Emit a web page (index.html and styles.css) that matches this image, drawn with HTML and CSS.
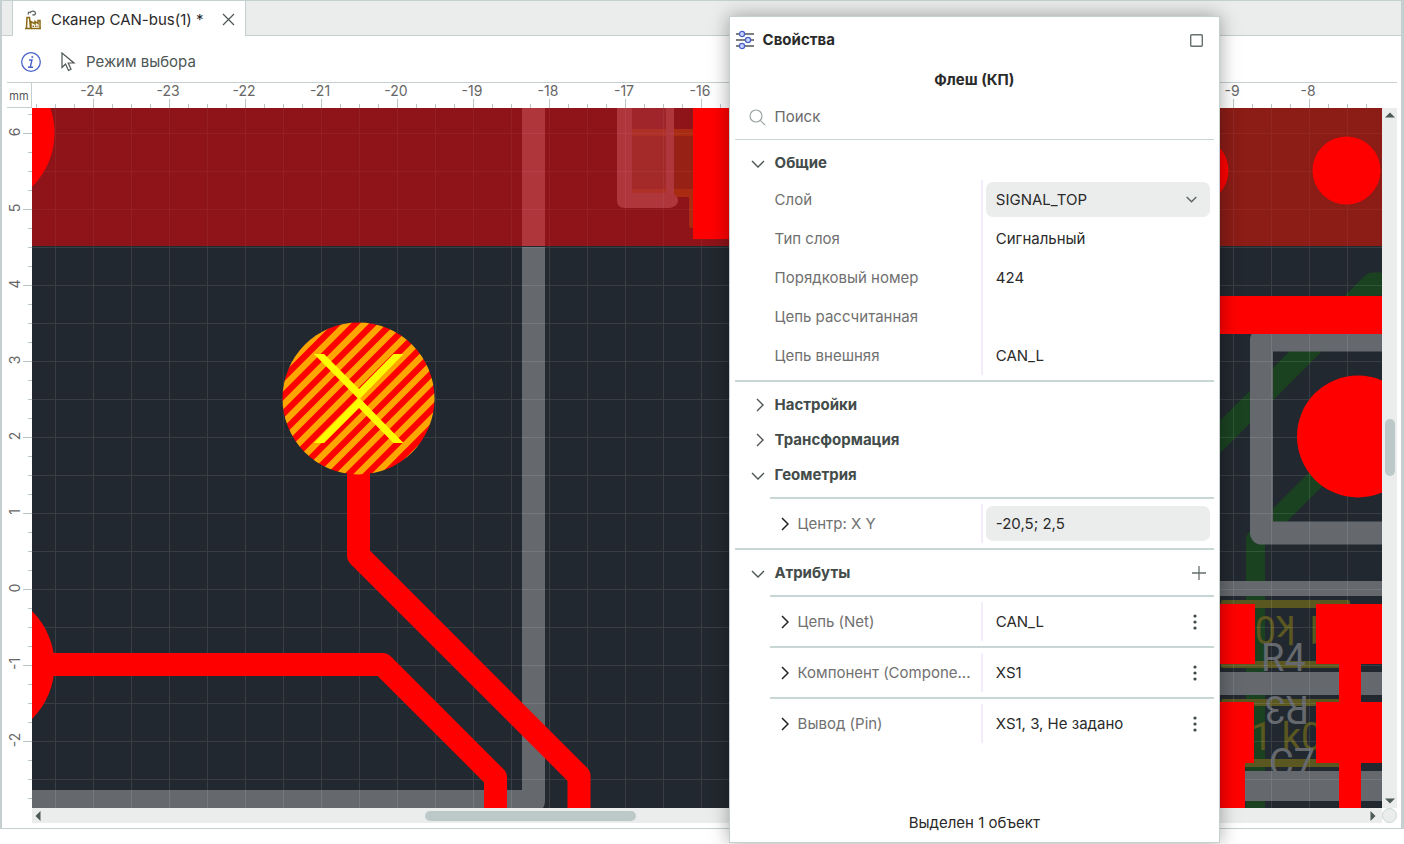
FILE: index.html
```html
<!DOCTYPE html>
<html lang="ru">
<head>
<meta charset="utf-8">
<title>Сканер CAN-bus(1)</title>
<link rel="stylesheet" href="styles.css">
</head>
<body>
<main class="window">
  <nav class="tabs">
    <div class="tab">
      <svg class="tab-icon" width="18" height="20" viewBox="0 0 18 20" fill="none">
        <path d="M4.500 4.500C3.500 2.500 5.500 1.500 6.500 2.500C7.500.3 11.500.8 11.500 3.500C11.500 5 9.500 5.500 8.500 4.500" stroke="#5a6462" stroke-width="1.300"/>
        <path d="M1 18.500H17M2.500 18L3 7.500H5.500L6.500 18M7 18V11.500L11 14V11.500L14 13.500V10.500H16V18" stroke="#8a6a14" stroke-width="1.500"/>
        <path d="M8.500 16.200H14.500" stroke="#8a6a14" stroke-width="1.500" stroke-dasharray="1.500 1"/>
      </svg>
      <span>Сканер CAN-bus(1) *</span>
      <button class="icon-button" aria-label="Закрыть">
        <svg width="13" height="13" viewBox="0 0 13 13" stroke="#4c5654" stroke-width="1.200"><path d="M1 1L12 12M12 1L1 12"/></svg>
      </button>
    </div>
  </nav>

  <header class="toolbar">
    <button class="icon-button" aria-label="Информация">
      <svg width="20" height="20" viewBox="0 0 20 20" fill="none" stroke="#4a62c8"><circle cx="10" cy="10" r="9.300" stroke-width="1.300"/><path d="M8 8H11L9.300 15M7 15.300H12" stroke-width="1.400"/><circle cx="11.300" cy="5" r=".6" fill="#4a62c8"/></svg>
    </button>
    <button class="mode">
      <svg width="15" height="20" viewBox="0 0 15 20" fill="none" stroke="#4c5654" stroke-width="1.200"><path d="M1 1V15.500L4.500 12L7.500 18.500L10 17.300L7.200 11L13 11Z"/></svg>
      <span>Режим выбора</span>
    </button>
  </header>

  <section class="workspace">
    <div class="corner">mm</div>
    <svg class="ruler-top" aria-label="Линейка X">
      <defs>
        <pattern id="tick-x" x="4" y="0" width="19" height="25" patternUnits="userSpaceOnUse"><rect y="21" width="1" height="4" fill="#b9c6c6"/></pattern>
        <pattern id="major-x" x="61" y="0" width="76" height="25" patternUnits="userSpaceOnUse"><rect y="16" width="1" height="9" fill="#b9c6c6"/></pattern>
      </defs>
      <rect width="100%" height="25" fill="url(#tick-x)"/>
      <rect width="100%" height="25" fill="url(#major-x)"/>
      <g class="marks">
        <text x="60" y="13">-24</text><text x="136" y="13">-23</text><text x="212" y="13">-22</text><text x="288" y="13">-21</text><text x="364" y="13">-20</text><text x="440" y="13">-19</text><text x="516" y="13">-18</text><text x="592" y="13">-17</text><text x="668" y="13">-16</text><text x="1200" y="13">-9</text><text x="1276" y="13">-8</text>
      </g>
    </svg>
    <div class="ruler-end"></div>

    <svg class="ruler-left" aria-label="Линейка Y">
      <defs>
        <pattern id="tick-y" x="0" y="6" width="25" height="19" patternUnits="userSpaceOnUse"><rect x="21" width="4" height="1" fill="#b9c6c6"/></pattern>
        <pattern id="major-y" x="0" y="25" width="25" height="76" patternUnits="userSpaceOnUse"><rect x="16" width="9" height="1" fill="#b9c6c6"/></pattern>
      </defs>
      <rect width="25" height="100%" fill="url(#tick-y)"/>
      <rect width="25" height="100%" fill="url(#major-y)"/>
      <g class="marks">
        <text transform="translate(13 24) rotate(-90)">6</text><text transform="translate(13 100) rotate(-90)">5</text><text transform="translate(13 176) rotate(-90)">4</text><text transform="translate(13 252) rotate(-90)">3</text><text transform="translate(13 328) rotate(-90)">2</text><text transform="translate(13 404) rotate(-90)">1</text><text transform="translate(13 480) rotate(-90)">0</text><text transform="translate(13 556) rotate(-90)">-1</text><text transform="translate(13 632) rotate(-90)">-2</text>
      </g>
    </svg>

    <svg class="board" role="img" aria-label="Плата">
      <defs>
        <pattern id="grid" x="55" y="133" width="38" height="38" patternUnits="userSpaceOnUse"><path d="M0 .5H38M.5 1V38" stroke="#fff"/></pattern>
        <pattern id="hatch" x="4" width="18" height="18" patternUnits="userSpaceOnUse"><rect width="18" height="18" fill="#f00"/><path d="M-6 6L6 -6M-6 24L24 -6M12 24L24 12" stroke="#ffa500" stroke-width="6.400"/></pattern>
      </defs>
      <g transform="translate(-32 -108)">
        <!-- lower layer -->
        <g fill="none" stroke="#1a4221">
          <path d="M1200 457L1373 284H1800" stroke-width="23" stroke-linejoin="round"/>
          <path d="M1400 395L1255.500 539.500V820" stroke-width="19" stroke-linejoin="round"/>
        </g>
        <!-- board outline and silk -->
        <path d="M533.500 247V801.500H0" fill="none" stroke="#65696e" stroke-width="23" stroke-linejoin="round"/>
        <path d="M1800 340H1261.500V533H1800" fill="none" stroke="#65696e" stroke-width="23" stroke-linejoin="round"/>
        <g fill="#5a5720">
          <rect x="1221" y="600" width="129" height="8" rx="2"/><rect x="1221" y="661" width="129" height="7" rx="2"/>
          <rect x="1221" y="699" width="129" height="7" rx="2"/><rect x="1221" y="759" width="129" height="8" rx="2"/>
        </g>
        <g class="silk silk-olive">
          <text transform="translate(1326 616) rotate(180)">1 k0</text>
          <text x="1251" y="750">1 k0</text>
        </g>
        <g class="silk silk-grey">
          <text x="1261" y="671">R4</text>
          <text transform="translate(1309 696) rotate(180)">R3</text>
          <text x="1269" y="776">C7</text>
        </g>
        <g fill="#65696e">
          <rect x="1200" y="581" width="600" height="15"/><rect x="1200" y="672" width="600" height="23"/><rect x="1200" y="771" width="600" height="30"/>
        </g>
        <!-- polygon fill -->
        <rect x="32" y="108" width="900" height="138" fill="#8e1419"/>
        <rect x="932" y="108" width="900" height="138" fill="#8b1c16"/>
        <rect x="522" y="108" width="23" height="138" fill="#af363a"/>
        <rect x="632" y="108" width="34" height="85" fill="#9f252a"/>
        <rect x="632" y="136" width="34" height="53" fill="#a32a28"/>
        <rect x="674" y="136" width="19" height="53" fill="#982115"/>
        <path d="M632 129H693V136H632ZM632 189H693V228H691Q689 228 689 225V197H632Z" fill="#a82b12"/>
        <path d="M632 129H666V136H632ZM632 189H666V193H632Z" fill="#af3026"/>
        <path d="M617 100H632V193H666V100H674V194Q678 196 678 201T670 208H625Q617 208 617 200Z" fill="#af363a"/>
        <rect x="32" y="108" width="1800" height="138" fill="url(#grid)" opacity=".05"/>
        <rect x="32" y="246" width="1800" height="600" fill="url(#grid)" opacity=".1"/>
        <!-- top copper -->
        <g fill="#f00">
          <circle cx="-21.500" cy="133" r="76"/><circle cx="-21.500" cy="665" r="76"/>
          <circle cx="1194.500" cy="170.500" r="34"/><circle cx="1346.500" cy="170.500" r="34"/>
          <circle cx="1358" cy="436.500" r="61"/>
          <rect x="693" y="108" width="60" height="131"/><rect x="1200" y="296" width="600" height="38"/>
          <rect x="1200" y="604" width="55" height="60"/><rect x="1316" y="604" width="84" height="60"/>
          <rect x="1200" y="702" width="54" height="61"/><rect x="1316" y="702" width="84" height="61"/>
          <rect x="1200" y="763" width="45" height="60"/><rect x="1339" y="650" width="22" height="170"/>
        </g>
        <g fill="none" stroke="#f00" stroke-width="23" stroke-linejoin="round">
          <path d="M0 664.500H382.500L495.500 777.500V820"/>
          <path d="M358.500 440V555.500L579 776V820"/>
        </g>
        <!-- selected flash -->
        <circle cx="358.500" cy="398.500" r="76" fill="url(#hatch)"/>
        <path d="M314 354H324L359 389L393.500 354H403.500L360 398.500L403.500 443H393.500L359 408L324 443H314L358 398.500Z" fill="#ff0"/>
      </g>
    </svg>

    <div class="scroll-y">
      <svg width="10" height="6" viewBox="0 0 10 6"><path d="M0 5.500L5 .5L10 5.500Z" fill="#4c5a58"/></svg>
      <span class="space-above"></span><span class="thumb"></span><span class="space-below"></span>
      <svg width="10" height="6" viewBox="0 0 10 6"><path d="M0 .5L5 5.500L10 .5Z" fill="#4c5a58"/></svg>
    </div>
    <div></div>
    <div class="scroll-x">
      <svg width="6" height="10" viewBox="0 0 6 10"><path d="M5.500 0L.5 5L5.500 10Z" fill="#4c5a58"/></svg>
      <span class="space-before"></span><span class="thumb"></span><span class="space-after"></span>
      <svg width="6" height="10" viewBox="0 0 6 10"><path d="M.5 0L5.500 5L.5 10Z" fill="#4c5a58"/></svg>
    </div>
    <div class="knob"></div>
  </section>
</main>

<aside class="panel">
  <header class="panel-head">
    <svg width="18" height="20" viewBox="0 0 18 20" fill="none"><path d="M0 4H18M0 10H18M0 16H18" stroke="#4c5654" stroke-width="1.300"/><g fill="#c9d4ff" stroke="#4a62c8" stroke-width="1.300"><circle cx="6" cy="4" r="2.600"/><circle cx="12" cy="10" r="2.600"/><circle cx="6" cy="16" r="2.600"/></g></svg>
    <h1>Свойства</h1>
    <button class="icon-button" aria-label="Развернуть"><svg width="13" height="13" viewBox="0 0 13 13" fill="none" stroke="#66706e" stroke-width="1.400"><rect x=".7" y=".7" width="11.600" height="11.600" rx="1"/></svg></button>
  </header>
  <h2>Флеш (КП)</h2>
  <div class="search">
    <svg width="17" height="17" viewBox="0 0 17 17" fill="none" stroke="#9aa6a4" stroke-width="1.200"><circle cx="7" cy="7" r="6"/><path d="M11.300 11.300L16 16"/></svg>
    <input type="text" placeholder="Поиск" aria-label="Поиск">
  </div>

  <button class="section first"><svg class="chevron" viewBox="0 0 14 14"><path d="M1 5L7 11L13 5"/></svg>Общие</button>
  <div class="row"><label class="name" for="layer">Слой</label><div class="value"><div class="select"><select id="layer" class="field"><option>SIGNAL_TOP</option></select><svg width="11" height="7" viewBox="0 0 11 7" fill="none" stroke="#5a6462" stroke-width="1.400"><path d="M.7.900L5.500 5.700L10.300.9"/></svg></div></div></div>
  <div class="row"><span class="name">Тип слоя</span><div class="value"><span class="text">Сигнальный</span></div></div>
  <div class="row"><span class="name">Порядковый номер</span><div class="value"><span class="text">424</span></div></div>
  <div class="row"><span class="name">Цепь рассчитанная</span><div class="value"></div></div>
  <div class="row"><span class="name">Цепь внешняя</span><div class="value"><span class="text">CAN_L</span></div></div>
  <hr>
  <button class="section"><svg class="chevron side" viewBox="0 0 14 14"><path d="M6 1L12 7L6 13"/></svg>Настройки</button>
  <button class="section"><svg class="chevron side" viewBox="0 0 14 14"><path d="M6 1L12 7L6 13"/></svg>Трансформация</button>
  <button class="section"><svg class="chevron" viewBox="0 0 14 14"><path d="M1 5L7 11L13 5"/></svg>Геометрия</button>
  <hr class="inset">
  <div class="row nested"><label class="name" for="center"><svg class="expand" viewBox="0 0 8 14"><path d="M1 1L7 7L1 13"/></svg>Центр: X Y</label><div class="value"><input id="center" class="field" type="text" value="-20,5; 2,5"></div></div>
  <hr>
  <div class="section-line">
    <button class="section"><svg class="chevron" viewBox="0 0 14 14"><path d="M1 5L7 11L13 5"/></svg>Атрибуты</button>
    <button class="icon-button add" aria-label="Добавить"><svg width="14" height="14" viewBox="0 0 14 14" stroke="#66706e" stroke-width="1.300"><path d="M0 7H14M7 0V14"/></svg></button>
  </div>
  <hr class="inset">
  <div class="row nested"><span class="name"><svg class="expand" viewBox="0 0 8 14"><path d="M1 1L7 7L1 13"/></svg>Цепь (Net)</span><div class="value"><span class="text">CAN_L</span><button class="icon-button more" aria-label="Действия"><svg width="4" height="16" viewBox="0 0 4 16" fill="#3f4947"><circle cx="2" cy="2" r="1.600"/><circle cx="2" cy="8" r="1.600"/><circle cx="2" cy="14" r="1.600"/></svg></button></div></div>
  <hr class="inset">
  <div class="row nested"><span class="name"><svg class="expand" viewBox="0 0 8 14"><path d="M1 1L7 7L1 13"/></svg>Компонент (Compone...</span><div class="value"><span class="text">XS1</span><button class="icon-button more" aria-label="Действия"><svg width="4" height="16" viewBox="0 0 4 16" fill="#3f4947"><circle cx="2" cy="2" r="1.600"/><circle cx="2" cy="8" r="1.600"/><circle cx="2" cy="14" r="1.600"/></svg></button></div></div>
  <hr class="inset">
  <div class="row nested"><span class="name"><svg class="expand" viewBox="0 0 8 14"><path d="M1 1L7 7L1 13"/></svg>Вывод (Pin)</span><div class="value"><span class="text">XS1, 3, Не задано</span><button class="icon-button more" aria-label="Действия"><svg width="4" height="16" viewBox="0 0 4 16" fill="#3f4947"><circle cx="2" cy="2" r="1.600"/><circle cx="2" cy="8" r="1.600"/><circle cx="2" cy="14" r="1.600"/></svg></button></div></div>
  <footer>Выделен 1 объект</footer>
</aside>
</body>
</html>
```
FILE: styles.css
```css
* { box-sizing: border-box; }

body {
  margin: 0;
  height: 100vh;
  overflow: hidden;
  background: #fff;
  color: #2a2a2a;
  font: 400 15px/20px Inter, "Noto Sans", sans-serif;
}

button, input, select { font: inherit; color: inherit; }
button { border: 0; padding: 0; background: none; }
svg { display: block; flex: none; }

.window {
  display: flex;
  flex-direction: column;
  height: calc(100vh - 15px);
  border: 1px solid #c5cfcf;
  border-width: 1px 3px 1px 2px;
}

.tabs {
  display: flex;
  height: 35px;
  padding-left: 10px;
  background: #ebedec;
  box-shadow: inset 0 -1px #c5cfcf;
}
.tab {
  display: flex;
  align-items: center;
  padding: 2px 10px 0 11px;
  border: 1px solid #c5cfcf;
  border-width: 0 1px;
  background: #fff;
}
.tab-icon { margin-right: 9px; }
.tab .icon-button { margin-left: 18px; }

.toolbar {
  display: flex;
  align-items: center;
  gap: 20px;
  height: 46px;
  margin: 0 4px 0 5px;
  padding: 6px 14px 0;
  color: #4c5654;
}
.mode { display: flex; align-items: center; gap: 10px; }

.workspace {
  flex: 1;
  min-height: 0;
  display: grid;
  grid-template: 26px minmax(0, 1fr) 15px / 25px minmax(0, 1fr) 15px;
  margin: 0 4px 5px 5px;
}
.corner {
  border: 1px solid #c5cfcf;
  border-left: 0;
  padding-top: 3px;
  color: #555;
  font-size: 11px;
  text-align: center;
}
.ruler-top, .ruler-end { border-top: 1px solid #c5cfcf; }
.ruler-top, .ruler-left, .board { width: 100%; height: 100%; }
.marks { font-size: 14px; text-anchor: middle; fill: #666; }
.board { background: #22282f; }
.silk { font: 400 38px Roboto, sans-serif; }
.silk-olive { fill: #5a5720; }
.silk-grey { fill: #65696e; }

.scroll-x, .scroll-y {
  display: flex;
  align-items: center;
  background: #ebedec;
}
.scroll-x { padding: 0 6px 0 3px; }
.scroll-y { flex-direction: column; padding: 4px 0; }
.thumb { border-radius: 5px; background: #bdc8c8; }
.scroll-x .thumb { height: 10px; flex: 211; }
.scroll-y .thumb { width: 10px; flex: 57; }
.space-before { flex: 384; }
.space-after { flex: 735; }
.space-above { flex: 301; }
.space-below { flex: 322; }
.knob {
  border: 1px solid #c8d8d4;
  border-radius: 50%;
  background: #ebedec;
}

.panel {
  position: absolute;
  top: 16px;
  right: 184px;
  bottom: 1px;
  display: flex;
  flex-direction: column;
  width: 35%;
  padding: 0 5px;
  border: 1px solid #c5cfcf;
  background: #fff;
  box-shadow: 0 0 18px rgba(0, 0, 0, .35);
}
.panel-head {
  display: flex;
  align-items: center;
  gap: 9px;
  height: 46px;
  padding: 0 11px 0 1px;
}
.panel-head .icon-button { margin-left: auto; }
h1, h2 { margin: 0; font-size: 15px; font-weight: 700; }
h2 { height: 33px; line-height: 33px; text-align: center; }

.search {
  display: flex;
  align-items: center;
  gap: 9px;
  height: 44px;
  padding: 0 0 1px 14px;
  border-bottom: 1px solid #c9d6d6;
}
.search input { flex: 1; border: 0; padding: 0; outline: 0; background: none; }
.search input::placeholder { color: #6a6a6a; opacity: 1; }

.section {
  display: flex;
  align-items: center;
  gap: 10px;
  height: 35px;
  padding-left: 16px;
  color: #434c4a;
  font-weight: 700;
}
.section.first { margin-top: 5px; }
.section-line { display: flex; align-items: center; justify-content: space-between; }
.add { padding-right: 8px; }
.chevron { width: 14px; height: 14px; fill: none; stroke: #4c5654; stroke-width: 1.4; }

hr {
  width: 100%;
  height: 2px;
  margin: 5px 0;
  border: 0;
  background: #c9d6d6;
}
hr.inset { width: auto; margin-left: 35px; }

.row {
  display: grid;
  grid-template-columns: minmax(0, 246fr) minmax(0, 233fr);
  height: 39px;
}
.name {
  display: flex;
  align-items: center;
  padding-left: 40px;
  color: #707070;
  white-space: nowrap;
}
.nested .name { gap: 9px; padding-left: 46px; }
.expand { width: 8px; height: 14px; fill: none; stroke: #222; stroke-width: 1.5; }
.value {
  display: flex;
  align-items: center;
  border-left: 2px solid #f3edfb;
  padding: 0 4px 0 3px;
}
.text { padding-left: 10px; }
.more { margin-left: auto; padding-right: 13px; }
.select { display: grid; align-items: center; width: 100%; }
.select > * { grid-area: 1 / 1; }
.select svg { justify-self: end; margin-right: 13px; pointer-events: none; }
.field {
  appearance: none;
  width: 100%;
  height: 35px;
  border: 0;
  border-radius: 7px;
  padding: 0 10px;
  background: #ebedec;
}

footer {
  margin-top: auto;
  height: 39px;
  line-height: 39px;
  text-align: center;
}
```
